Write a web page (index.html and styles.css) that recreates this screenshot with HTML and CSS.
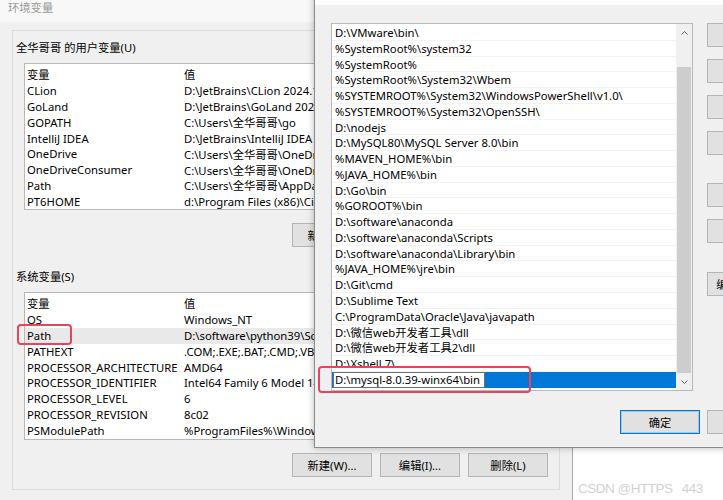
FILE: index.html
```html
<!DOCTYPE html>
<html lang="zh-CN">
<head>
<meta charset="utf-8">
<title>环境变量</title>
<link rel="stylesheet" href="styles.css">
</head>
<body>
<div class="desktop">
  <div class="win-env">
    <div class="env-title">环境变量</div>
    <div class="env-panel">
      <div class="group-label">全华哥哥 的用户变量(U)</div>
      <div class="listview user">
        <div class="lv-head"><span class="c1">变量</span><span class="c2">值</span></div>
        <div class="lv-row"><span class="c1">CLion</span><span class="c2">D:\JetBrains\CLion 2024.1.4\bin;</span></div>
        <div class="lv-row"><span class="c1">GoLand</span><span class="c2">D:\JetBrains\GoLand 2024.1\bin;</span></div>
        <div class="lv-row"><span class="c1">GOPATH</span><span class="c2">C:\Users\全华哥哥\go</span></div>
        <div class="lv-row"><span class="c1">IntelliJ IDEA</span><span class="c2">D:\JetBrains\IntelliJ IDEA 2024.1\bin;</span></div>
        <div class="lv-row"><span class="c1">OneDrive</span><span class="c2">C:\Users\全华哥哥\OneDrive</span></div>
        <div class="lv-row"><span class="c1">OneDriveConsumer</span><span class="c2">C:\Users\全华哥哥\OneDrive</span></div>
        <div class="lv-row"><span class="c1">Path</span><span class="c2">C:\Users\全华哥哥\AppData\Local\Microsoft\WindowsApps;</span></div>
        <div class="lv-row"><span class="c1">PT6HOME</span><span class="c2">d:\Program Files (x86)\Cisco Packet Tracer 6.0</span></div>
      </div>
      <div class="btn-row">
        <div class="btn">新建(W)...</div>
        <div class="btn">编辑(E)...</div>
        <div class="btn">删除(D)</div>
      </div>

      <div class="group-label sys-label">系统变量(S)</div>
      <div class="listview sys">
        <div class="lv-head"><span class="c1">变量</span><span class="c2">值</span></div>
        <div class="lv-row"><span class="c1">OS</span><span class="c2">Windows_NT</span></div>
        <div class="lv-row sel"><span class="c1">Path</span><span class="c2">D:\software\python39\Scripts\;D:\software\python39\</span></div>
        <div class="lv-row"><span class="c1">PATHEXT</span><span class="c2">.COM;.EXE;.BAT;.CMD;.VBS;.VBE;.JS;.JSE;.WSF;.WSH;.MSC</span></div>
        <div class="lv-row"><span class="c1">PROCESSOR_ARCHITECTURE</span><span class="c2">AMD64</span></div>
        <div class="lv-row"><span class="c1">PROCESSOR_IDENTIFIER</span><span class="c2">Intel64 Family 6 Model 140 Stepping 1, GenuineIntel</span></div>
        <div class="lv-row"><span class="c1">PROCESSOR_LEVEL</span><span class="c2">6</span></div>
        <div class="lv-row"><span class="c1">PROCESSOR_REVISION</span><span class="c2">8c02</span></div>
        <div class="lv-row"><span class="c1">PSModulePath</span><span class="c2">%ProgramFiles%\WindowsPowerShell\Modules;</span></div>
      </div>
      <div class="btn-row">
        <div class="btn">新建(W)...</div>
        <div class="btn">编辑(I)...</div>
        <div class="btn">删除(L)</div>
      </div>
    </div>
  </div>

  <div class="win-edit">
    <div class="edit-title"></div>
    <div class="edit-body">
      <div class="edit-main">
        <div class="pathlist">
          <div class="items">
            <div class="item">D:\VMware\bin\</div>
            <div class="item">%SystemRoot%\system32</div>
            <div class="item">%SystemRoot%</div>
            <div class="item">%SystemRoot%\System32\Wbem</div>
            <div class="item">%SYSTEMROOT%\System32\WindowsPowerShell\v1.0\</div>
            <div class="item">%SYSTEMROOT%\System32\OpenSSH\</div>
            <div class="item">D:\nodejs</div>
            <div class="item">D:\MySQL80\MySQL Server 8.0\bin</div>
            <div class="item">%MAVEN_HOME%\bin</div>
            <div class="item">%JAVA_HOME%\bin</div>
            <div class="item">D:\Go\bin</div>
            <div class="item">%GOROOT%\bin</div>
            <div class="item">D:\software\anaconda</div>
            <div class="item">D:\software\anaconda\Scripts</div>
            <div class="item">D:\software\anaconda\Library\bin</div>
            <div class="item">%JAVA_HOME%\jre\bin</div>
            <div class="item">D:\Git\cmd</div>
            <div class="item">D:\Sublime Text</div>
            <div class="item">C:\ProgramData\Oracle\Java\javapath</div>
            <div class="item">D:\微信web开发者工具\dll</div>
            <div class="item">D:\微信web开发者工具2\dll</div>
            <div class="item">D:\Xshell 7\</div>
            <div class="item editing"><span class="edit-box">D:\mysql-8.0.39-winx64\bin</span></div>
          </div>
          <div class="scroll">
            <div class="arrow"><svg width="7" height="4" viewBox="0 0 7 4"><polyline points="0.5,3.5 3.5,0.5 6.5,3.5" fill="none" stroke="#606060" stroke-width="1"/></svg></div>
            <div class="track"><div class="thumb"></div></div>
            <div class="arrow"><svg width="7" height="4" viewBox="0 0 7 4"><polyline points="0.5,0.5 3.5,3.5 6.5,0.5" fill="none" stroke="#606060" stroke-width="1"/></svg></div>
          </div>
        </div>
        <div class="side-btns">
          <div class="btn wide">新建(N)</div>
          <div class="btn wide">编辑(E)</div>
          <div class="btn wide">浏览(B)...</div>
          <div class="btn wide">删除(D)</div>
          <div class="btn wide group">上移(U)</div>
          <div class="btn wide">下移(O)</div>
          <div class="btn wide group2">编辑文本(T)...</div>
        </div>
      </div>
      <div class="bottom-row">
        <div class="btn default">确定</div>
        <div class="btn">取消</div>
      </div>
    </div>
  </div>

  <div class="red-box rb-path"></div>
  <div class="red-box rb-edit"></div>
  <div class="watermark">CSDN @HTTPS <span class="wm-num">443</span></div>
</div>
</body>
</html>
```

FILE: styles.css
```css
* { box-sizing: border-box; }
html, body { margin: 0; padding: 0; }
body {
  width: 723px;
  height: 500px;
  overflow: hidden;
  background: #ffffff;
  font-family: "Noto Sans", "Noto Sans CJK SC", sans-serif;
  font-size: 11.3px;
  color: #000;
}
.desktop {
  position: relative;
  width: 723px;
  height: 500px;
  overflow: hidden;
  background: #ffffff;
}

/* ---------- left window: 环境变量 ---------- */
.win-env {
  position: absolute;
  left: 0;
  top: 0;
  width: 573px;
  height: 510px;
  background: #f0f0f0;
  border-right: 1px solid #a9a9a9;
}
.env-title {
  height: 22px;
  background: #f8f8f8;
  color: #9a9a9a;
  padding: 0 0 0 8px;
  line-height: 15px;
  white-space: nowrap;
}
.env-panel {
  margin: 8px 12px 0;
  height: 460px;
  border: 1px solid #dcdcdc;
  padding: 9px 0 0 3px;
}
.group-label {
  height: 16px;
  line-height: 16px;
  white-space: nowrap;
}
.sys-label { margin-top: 22px; }
.listview {
  margin: 7px 0 0 8px;
  width: 524px;
  background: #fff;
  border: 1px solid #b9b9b9;
  overflow: hidden;
}
.listview.user { height: 147px; }
.listview.sys { height: 148px; }
.lv-head {
  height: 19px;
  display: flex;
  align-items: center;
  white-space: nowrap;
}
.lv-row {
  height: 15.77px;
  display: flex;
  align-items: center;
  white-space: nowrap;
}
.lv-row.sel { background: #e9e9e9; }
.c1 { width: 159px; padding-left: 2px; flex: none; overflow: hidden; }
.c2 { flex: none; }

.btn-row {
  width: 532px;
  margin-top: 13px;
  display: flex;
  justify-content: flex-end;
  gap: 8px;
}
.btn {
  width: 80px;
  height: 24px;
  background: #e1e1e1;
  border: 1px solid #b4b4b4;
  display: flex;
  align-items: center;
  justify-content: center;
  white-space: nowrap;
  flex: none;
}

/* ---------- right window: 编辑环境变量 ---------- */
.win-edit {
  position: absolute;
  left: 314px;
  top: -30px;
  width: 520px;
  height: 478px;
  background: #f0f0f0;
  border: 1px solid #8a8a8a;
  box-shadow: 0 0 7px rgba(0, 0, 0, 0.28);
}
.edit-title {
  height: 34px;
  background: #ffffff;
}
.edit-body {
  padding: 18px 0 0 16px;
}
.edit-main {
  display: flex;
  align-items: flex-start;
  gap: 14px;
}
.pathlist {
  width: 362px;
  height: 368px;
  background: #fff;
  border: 1px solid #b9b9b9;
  display: flex;
  flex: none;
}
.items {
  flex: 1;
  padding-top: 1px;
  min-width: 0;
}
.item {
  height: 15.77px;
  line-height: 15.77px;
  padding-left: 3px;
  white-space: nowrap;
  box-shadow: inset 0 -1px 0 #f3f3f3;
}
.item.editing {
  background: #0078d7;
  box-shadow: none;
  padding-left: 1px;
  display: flex;
}
.edit-box {
  display: block;
  width: 152px;
  height: 100%;
  background: #fff;
  border: 1px solid #6f6f6f;
  padding-left: 1px;
  line-height: 14px;
}
.scroll {
  width: 16px;
  background: #f0f0f0;
  display: flex;
  flex-direction: column;
  flex: none;
}
.arrow {
  height: 17px;
  display: flex;
  align-items: center;
  justify-content: center;
  flex: none;
}
.track {
  flex: 1;
  padding: 26px 1px 0;
}
.thumb {
  height: 306px;
  background: #cdcdcd;
}
.side-btns {
  display: flex;
  flex-direction: column;
  gap: 12px;
}
.btn.wide { width: 86px; }
.btn.group { margin-top: 16px; }
.btn.group2 { margin-top: 17px; }
.bottom-row {
  margin: 19px 0 0 289px;
  display: flex;
  gap: 7px;
}
.btn.default {
  border: 1px solid #0078d7;
  box-shadow: inset 0 0 0 1px rgba(0, 120, 215, 0.25);
}

/* ---------- annotations ---------- */
.red-box {
  position: absolute;
  border: 2px solid #e8455c;
  border-radius: 4px;
}
.rb-path { left: 17px; top: 324px; width: 55px; height: 21px; }
.rb-edit { left: 318px; top: 366px; width: 213px; height: 27px; }

.watermark {
  position: absolute;
  left: 578px;
  top: 480px;
  font-family: "Liberation Sans", Arial, sans-serif;
  font-size: 13.5px;
  line-height: 17px;
  letter-spacing: -0.5px;
  color: #d2d2d2;
  white-space: nowrap;
}
.wm-num { margin-left: 6px; }
```
